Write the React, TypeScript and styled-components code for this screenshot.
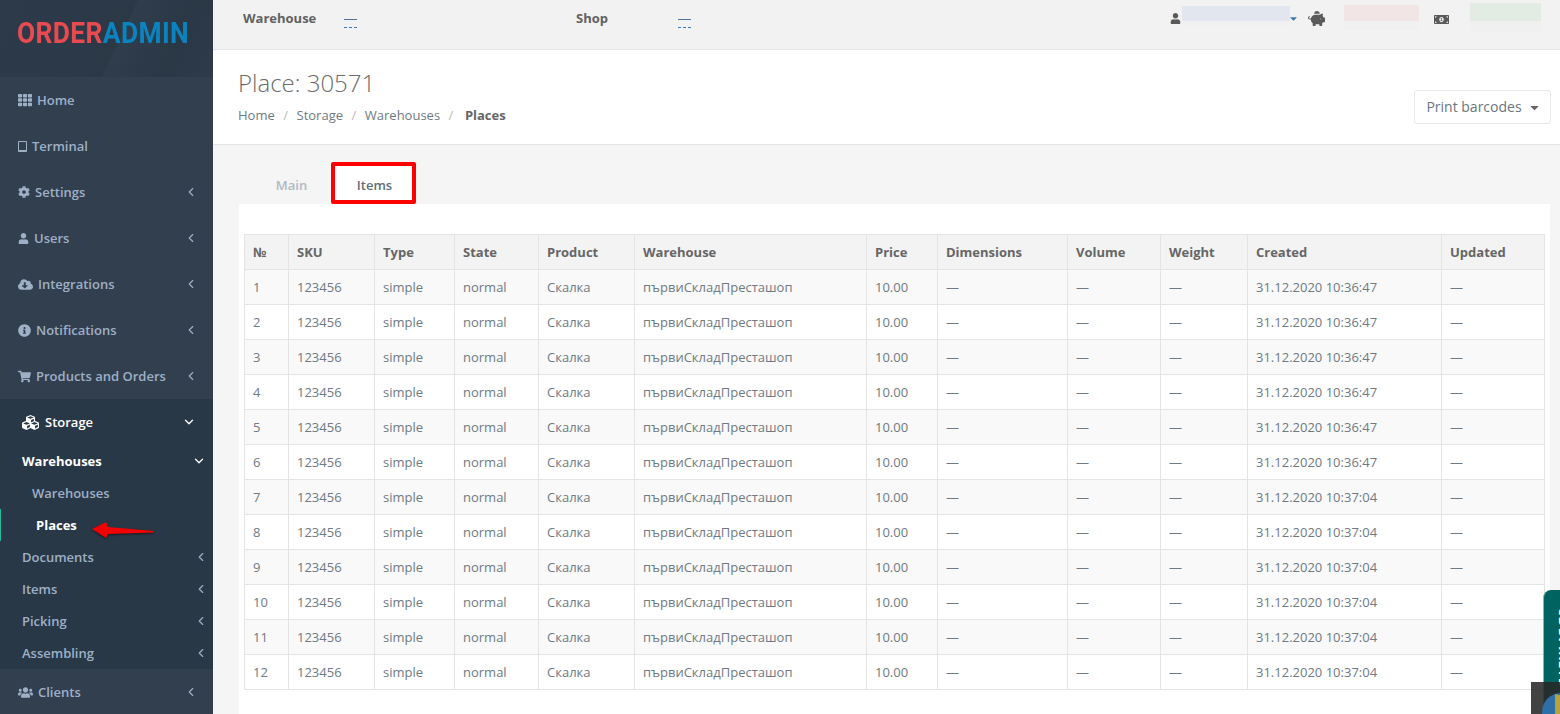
import React from "react";
import styled, { createGlobalStyle } from "styled-components";
import { FaTh, FaCog, FaUser, FaCloudDownloadAlt, FaInfoCircle, FaShoppingCart, FaCubes, FaUsers, FaPiggyBank, FaMoneyBillAlt, FaCaretDown } from "react-icons/fa";
import { ChevronLeft, ChevronDown } from "lucide-react";

const Global = createGlobalStyle`
  html, body { margin: 0; padding: 0; height: 714px; overflow: hidden; background: #f5f5f5; }
  body { font-family: "Open Sans", "Liberation Sans", sans-serif; font-size: 13px; color: #616f77; }
  * { box-sizing: border-box; }
`;

const Page = styled.div`
  display: flex;
  width: 1560px;
  height: 714px;
  overflow: hidden;
  position: relative;
`;

const Sidebar = styled.aside`
  width: 213px;
  flex: none;
  background: #313f4f;
  display: flex;
  flex-direction: column;
  position: relative;
`;

const LogoBar = styled.div`
  height: 77px;
  flex: none;
  padding: 16px 0 0 17px;
  background: linear-gradient(115deg, #2c3a4a 0%, #2b3947 55%, #2f3d4c 56%, #2a3846 80%, #2d3b4b 100%);
`;

const LogoText = styled.div`
  display: inline-block;
  font-family: Roboto, "Open Sans", sans-serif;
  font-size: 29px;
  line-height: 34px;
  font-weight: 700;
  letter-spacing: 0.4px;
  white-space: nowrap;
  transform: scaleX(0.91);
  transform-origin: left center;
`;

const LogoRed = styled.span`color: #e84a50;`;
const LogoBlue = styled.span`color: #0a84bf;`;

const NavItem = styled.div<{ $icon?: number }>`
  height: 46px;
  flex: none;
  display: flex;
  align-items: center;
  padding: 0 18px;
  font-weight: 600;
  font-size: 13px;
  color: #9fb0c6;
  gap: 5px;
  position: relative;
  svg.ico { font-size: ${(p) => p.$icon ?? 14}px; flex: none; }
`;

const Chevron = styled.span<{ $right: number; $light?: boolean }>`
  position: absolute;
  right: ${(p) => p.$right}px;
  top: 50%;
  transform: translateY(-50%);
  display: flex;
  color: ${(p) => (p.$light ? "#fff" : "#9fb0c6")};
`;

const TabletBox = styled.span`
  width: 9px;
  height: 11px;
  border: 1px solid #9fb0c6;
  border-bottom-width: 2px;
  border-radius: 1px;
  flex: none;
`;

const Group = styled.div`
  background: #293847;
  height: 270px;
  flex: none;
  display: flex;
  flex-direction: column;
  position: relative;
`;

const GroupHead = styled.div`
  height: 46px;
  flex: none;
  display: flex;
  align-items: center;
  gap: 6px;
  padding-left: 22px;
  color: #fff;
  font-weight: 600;
  font-size: 13px;
  position: relative;
  svg.ico { font-size: 17px; }
`;

const SubHead = styled.div`
  height: 32px;
  flex: none;
  display: flex;
  align-items: center;
  padding-left: 22px;
  color: #fff;
  font-weight: 700;
  position: relative;
`;

const SubItem = styled.div<{ $active?: boolean }>`
  height: 32px;
  flex: none;
  display: flex;
  align-items: center;
  padding-left: ${(p) => (p.$active ? 35 : 22)}px;
  color: ${(p) => (p.$active ? "#fff" : "#9fb0c6")};
  font-weight: ${(p) => (p.$active ? 700 : 600)};
  position: relative;
  border-left: ${(p) => (p.$active ? "1px solid #1abc9c" : "none")};
`;

const DeepItem = styled(SubItem)`
  padding-left: 32px;
`;

const Arrow = styled.svg`
  position: absolute;
  left: 90px;
  top: 518px;
  overflow: visible;
  filter: drop-shadow(0 1px 1px rgba(0, 0, 0, 0.55));
`;

const Main = styled.main`
  flex: 1;
  min-width: 0;
  display: flex;
  flex-direction: column;
`;

const TopBar = styled.header`
  height: 50px;
  flex: none;
  background: #f2f2f2;
  border-bottom: 1px solid #e4e4e4;
  display: flex;
  align-items: flex-start;
  padding: 9px 0 0 30px;
  position: relative;
`;

const TopGroup = styled.div<{ $w: number }>`
  width: ${(p) => p.$w}px;
  flex: none;
  display: flex;
  font-weight: 700;
  font-size: 13px;
  line-height: 18px;
  color: #616161;
`;

const TopLabel = styled.span<{ $w: number }>`
  width: ${(p) => p.$w}px;
  flex: none;
`;

const DashLink = styled.span`
  width: 13px;
  height: 10px;
  margin-top: 10px;
  border-top: 1px solid #4d729c;
  position: relative;
  &::after {
    content: "";
    position: absolute;
    left: 0;
    right: 0;
    top: 7px;
    border-top: 1px dashed #337ab7;
  }
`;

const TopRight = styled.div`
  margin-left: auto;
  display: flex;
  align-items: flex-start;
  color: #5a5a5a;
  font-size: 13px;
  position: relative;
  margin-top: -3px;
  padding-right: 19px;
`;

const Blur = styled.div<{ $w: number; $h: number; $f: number; $c: string; $mt: number; $ml: number }>`
  width: ${(p) => p.$w}px;
  height: ${(p) => p.$h + p.$f}px;
  background: linear-gradient(${(p) => p.$c} ${(p) => p.$h}px, #eff0ef ${(p) => p.$h}px);
  margin-top: ${(p) => p.$mt}px;
  margin-left: ${(p) => p.$ml}px;
  flex: none;
`;

const TopIcon = styled.span<{ $mt: number; $ml: number; $blue?: boolean }>`
  display: flex;
  margin-top: ${(p) => p.$mt}px;
  margin-left: ${(p) => p.$ml}px;
  color: ${(p) => (p.$blue ? "#337ab7" : "#5a5a5a")};
  flex: none;
`;

const PageHead = styled.section`
  height: 95px;
  flex: none;
  background: #fff;
  border-bottom: 1px solid #e4e4e4;
  padding: 16px 9px 0 25px;
  display: flex;
  justify-content: space-between;
  align-items: flex-start;
`;

const Title = styled.h1`
  margin: 0;
  font-size: 24px;
  line-height: 34px;
  font-weight: 300;
  color: #6b6b6b;
`;

const Crumbs = styled.div`
  display: flex;
  margin-top: 6px;
  font-size: 13px;
  line-height: 18px;
  color: #6f7a82;
`;

const Sep = styled.span`
  margin: 0 8.5px;
  color: #bbb;
`;

const CrumbNow = styled.b`
  font-weight: 700;
  color: #666;
  margin-left: 3px;
`;

const PrintBtn = styled.button`
  margin-top: 24px;
  width: 137px;
  height: 34px;
  background: #fff;
  border: 1px solid #e6e6e6;
  border-radius: 3px;
  font-family: inherit;
  font-size: 14px;
  color: #6b7680;
  display: flex;
  align-items: center;
  justify-content: center;
  gap: 6px;
  padding: 0 0 2px 2px;
  svg { font-size: 13px; color: #666; margin-top: 2px; }
`;

const Content = styled.section`
  flex: 1;
  min-height: 0;
  background: #f5f5f5;
  padding: 20px 10px 0 26px;
  display: flex;
  flex-direction: column;
`;

const Tabs = styled.div`
  display: flex;
  height: 39px;
  flex: none;
  padding-left: 12px;
`;

const Tab = styled.div<{ $active?: boolean; $w: number }>`
  width: ${(p) => p.$w}px;
  display: flex;
  align-items: center;
  justify-content: center;
  font-size: 13px;
  font-weight: 600;
  color: ${(p) => (p.$active ? "#616f77" : "#b0b8c4")};
  background: ${(p) => (p.$active ? "#fff" : "transparent")};
  position: relative;
  ${(p) => (p.$active ? "margin-left: 3px; padding-left: 2px;" : "")}
  ${(p) =>
    p.$active
      ? `&::after {
    content: "";
    position: absolute;
    left: -4px;
    right: -4px;
    top: -3px;
    bottom: 0;
    border: 4px solid #ff0000;
    border-radius: 2px;
  }`
      : ""}
`;

const Panel = styled.div`
  flex: 1;
  min-height: 0;
  background: #fff;
  padding: 30px 5px 0 5px;
`;

const Table = styled.table`
  border-collapse: collapse;
  table-layout: fixed;
  width: 1300px;
  font-size: 13px;
  color: #6f7a82;
`;

const Col = styled.col<{ $w: number }>`
  width: ${(p) => p.$w}px;
`;

const Th = styled.th`
  height: 35px;
  padding: 0 8px;
  text-align: left;
  font-weight: 700;
  color: #666;
  background: #f3f3f3;
  border: 1px solid #e4e4e4;
  white-space: nowrap;
`;

const Tr = styled.tr<{ $odd: boolean }>`
  background: ${(p) => (p.$odd ? "#f9f9f9" : "#fff")};
`;

const Td = styled.td`
  height: 35px;
  padding: 0 8px;
  border: 1px solid #e4e4e4;
  white-space: nowrap;
  overflow: hidden;
`;

const Feedback = styled.div`
  position: absolute;
  left: 1543px;
  top: 590px;
  width: 24px;
  height: 130px;
  background: #00635f;
  border-left: 1px solid #8fb3b1;
  border-top-left-radius: 8px;
  color: #fff;
  font-size: 14px;
  font-weight: 700;
  overflow: hidden;
  white-space: nowrap;
`;

const FeedbackText = styled.span`
  display: block;
  writing-mode: vertical-rl;
  margin: 17px 0 0 11px;
  letter-spacing: 0.6px;
  text-transform: uppercase;
`;

const Corner = styled.div`
  position: absolute;
  left: 1531px;
  top: 682px;
  width: 29px;
  height: 32px;
  background: rgba(40, 40, 40, 0.88);
  overflow: hidden;
`;

const Globe = styled.svg`
  position: absolute;
  left: 10px;
  top: 10px;
`;

const nav1 = [
  { t: "Settings", s: 12, i: <FaCog className="ico" /> },
  { t: "Users", s: 11, i: <FaUser className="ico" /> },
  { t: "Integrations", s: 15, i: <FaCloudDownloadAlt className="ico" /> },
  { t: "Notifications", s: 13, i: <FaInfoCircle className="ico" /> },
  { t: "Products and Orders", s: 13, i: <FaShoppingCart className="ico" /> },
];

const cols = [44, 86, 80, 84, 96, 232, 71, 130, 93, 87, 194, 103];
const heads = ["№", "SKU", "Type", "State", "Product", "Warehouse", "Price", "Dimensions", "Volume", "Weight", "Created", "Updated"];

const rows = Array.from({ length: 12 }, (_, i) => i + 1);

const Left = () => <ChevronLeft size={14} strokeWidth={2} />;
const Down = () => <ChevronDown size={14} strokeWidth={2.2} />;

export default function App() {
  return (
    <Page>
      <Global />
      <Sidebar>
        <LogoBar>
          <LogoText>
            <LogoRed>ORDER</LogoRed>
            <LogoBlue>ADMIN</LogoBlue>
          </LogoText>
        </LogoBar>
        <NavItem>
          <FaTh className="ico" />
          Home
        </NavItem>
        <NavItem>
          <TabletBox />
          Terminal
        </NavItem>
        {nav1.map((n) => (
          <NavItem key={n.t} $icon={n.s}>
            {n.i}
            {n.t}
            <Chevron $right={15}>
              <Left />
            </Chevron>
          </NavItem>
        ))}
        <Group>
          <GroupHead>
            <FaCubes className="ico" />
            Storage
            <Chevron $right={17} $light>
              <Down />
            </Chevron>
          </GroupHead>
          <SubHead>
            Warehouses
            <Chevron $right={7} $light>
              <Down />
            </Chevron>
          </SubHead>
          <DeepItem>Warehouses</DeepItem>
          <SubItem $active>Places</SubItem>
          {["Documents", "Items", "Picking", "Assembling"].map((t) => (
            <SubItem key={t}>
              {t}
              <Chevron $right={5}>
                <Left />
              </Chevron>
            </SubItem>
          ))}
        </Group>
        <NavItem $icon={15}>
          <FaUsers className="ico" />
          Clients
          <Chevron $right={15}>
            <Left />
          </Chevron>
        </NavItem>
        <Arrow width="66" height="24" viewBox="0 0 66 24">
          <polygon points="2,11 16,4 18,9 64,13 64,14.5 18,16 16,20" fill="#f40000" />
        </Arrow>
      </Sidebar>
      <Main>
        <TopBar>
          <TopGroup $w={333}>
            <TopLabel $w={101}>Warehouse</TopLabel>
            <DashLink />
          </TopGroup>
          <TopGroup $w={200}>
            <TopLabel $w={102}>Shop</TopLabel>
            <DashLink />
          </TopGroup>
          <TopRight>
            <TopIcon $mt={7} $ml={0}>
              <FaUser size={11} />
            </TopIcon>
            <Blur $w={108} $h={15} $f={4} $c="#e2e6ee" $mt={0} $ml={1} />
            <TopIcon $mt={7} $ml={-2} $blue>
              <FaCaretDown size={11} />
            </TopIcon>
            <TopIcon $mt={4} $ml={9}>
              <FaPiggyBank size={17} />
            </TopIcon>
            <Blur $w={75} $h={16} $f={9} $c="#f1e5e5" $mt={-1} $ml={19} />
            <TopIcon $mt={6} $ml={15}>
              <FaMoneyBillAlt size={15} />
            </TopIcon>
            <Blur $w={71} $h={18} $f={11} $c="#e3ece3" $mt={-3} $ml={21} />
          </TopRight>
        </TopBar>
        <PageHead>
          <div>
            <Title>Place: 30571</Title>
            <Crumbs>
              Home<Sep>/</Sep>Storage<Sep>/</Sep>Warehouses<Sep>/</Sep>
              <CrumbNow>Places</CrumbNow>
            </Crumbs>
          </div>
          <PrintBtn>
            Print barcodes <FaCaretDown />
          </PrintBtn>
        </PageHead>
        <Content>
          <Tabs>
            <Tab $w={81}>Main</Tab>
            <Tab $active $w={77}>Items</Tab>
          </Tabs>
          <Panel>
            <Table>
              <colgroup>
                {cols.map((w, i) => (
                  <Col key={i} $w={w} />
                ))}
              </colgroup>
              <thead>
                <tr>
                  {heads.map((h) => (
                    <Th key={h}>{h}</Th>
                  ))}
                </tr>
              </thead>
              <tbody>
                {rows.map((n) => (
                  <Tr key={n} $odd={n % 2 === 1}>
                    <Td>{n}</Td>
                    <Td>123456</Td>
                    <Td>simple</Td>
                    <Td>normal</Td>
                    <Td>Скалка</Td>
                    <Td>първиСкладПресташоп</Td>
                    <Td>10.00</Td>
                    <Td>—</Td>
                    <Td>—</Td>
                    <Td>—</Td>
                    <Td>{n <= 6 ? "31.12.2020 10:36:47" : "31.12.2020 10:37:04"}</Td>
                    <Td>—</Td>
                  </Tr>
                ))}
              </tbody>
            </Table>
          </Panel>
        </Content>
      </Main>
      <Feedback>
        <FeedbackText>Свържете се</FeedbackText>
      </Feedback>
      <Corner>
        <Globe width="40" height="40" viewBox="0 0 40 40">
          <circle cx="20" cy="20" r="19" fill="#2f6fa8" />
          <path d="M14 2 L38 8 L39 26 L14 32 Z" fill="#b8a23a" />
        </Globe>
      </Corner>
    </Page>
  );
}
